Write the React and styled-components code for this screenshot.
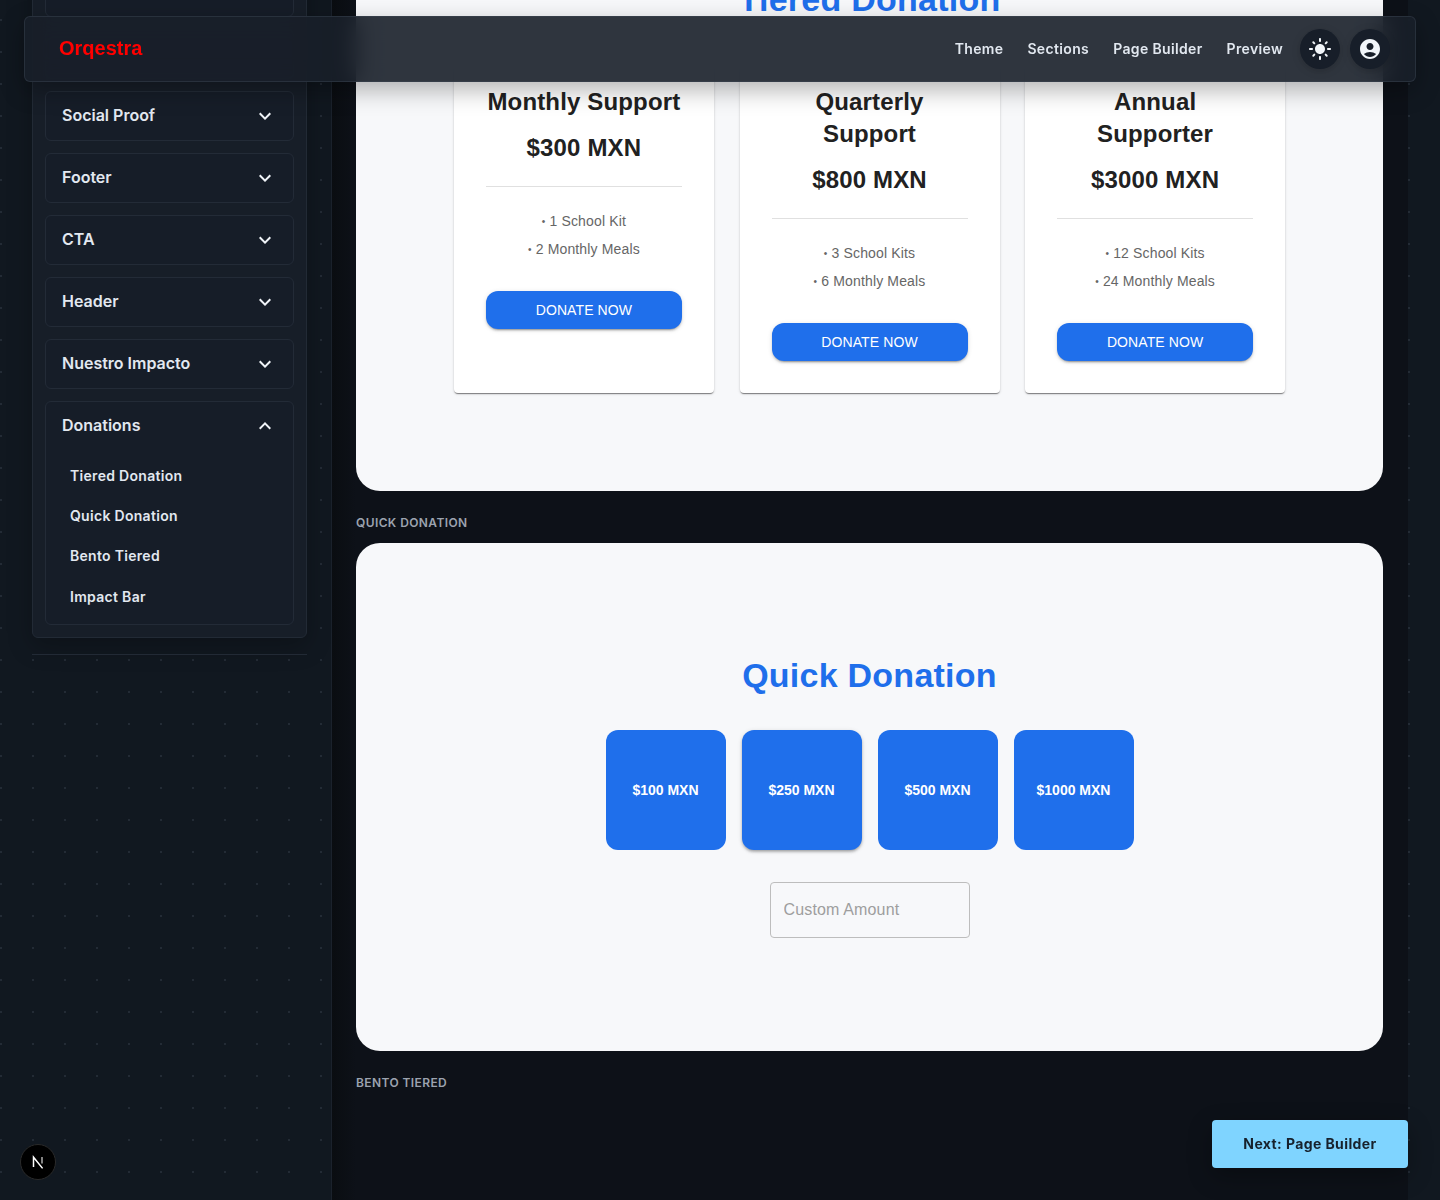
import React from 'react';
import styled, { createGlobalStyle } from 'styled-components';
import { MdExpandMore, MdExpandLess, MdLightMode, MdAccountCircle } from 'react-icons/md';

const GlobalStyle = createGlobalStyle`
  html, body {
    margin: 0;
    padding: 0;
    height: 1200px;
    overflow: hidden;
    font-family: Inter, "Liberation Sans", sans-serif;
    background-color: #111820;
    background-image: radial-gradient(circle at center, #232b35 1px, transparent 1.2px);
    background-size: 32px 32px;
    background-position: -15px 4px;
  }
  * {
    box-sizing: border-box;
  }
`;

const Layout = styled.div`
  display: flex;
  height: 1200px;
  overflow: hidden;
`;

const Sidebar = styled.aside`
  flex: 0 0 332px;
  padding: 0 24px 0 32px;
  border-right: 1px solid #1b222c;
`;
const Panel = styled.div`
  margin-top: -46px;
  padding: 12px;
  background: #171e28;
  border: 1px solid #222a35;
  border-radius: 6px;
  display: flex;
  flex-direction: column;
  gap: 12px;
  box-shadow: 0 8px 24px rgba(0, 0, 0, 0.25);
`;
const Accordion = styled.div`
  background: #161d28;
  border: 1px solid #232b37;
  border-radius: 6px;
  ${p => p.$open && 'padding-bottom: 7px;'}
`;
const AccordionHead = styled.div`
  height: 48px;
  display: flex;
  align-items: center;
  justify-content: space-between;
  padding: 0 16px;
  color: #e2e8f0;
  font-size: 16px;
  font-weight: 600;
  svg {
    font-size: 24px;
    color: #f1f5f9;
  }
`;
const AccordionTitle = styled.span`
  margin-bottom: 2px;
`;
const SubList = styled.div`
  padding: 5px 24px 0;
`;
const SubItem = styled.div`
  height: 40.4px;
  display: flex;
  align-items: center;
  color: #e2e8f0;
  font-size: 14px;
  font-weight: 600;
  letter-spacing: 0.3px;
`;
const SideDivider = styled.div`
  margin-top: 16px;
  height: 1px;
  background: #222a35;
`;

const Main = styled.main`
  flex: 0 0 1076px;
  background: linear-gradient(90deg, #0a0d11, #0d1118 24px);
  padding: 0 25px 0 24px;
`;
const Scrolled = styled.div`
  margin-top: -133px;
`;
const Preview = styled.section`
  background: #f7f8fa;
  border-radius: 24px;
  text-align: center;
  font-family: "Liberation Sans", Arial, sans-serif;
  padding: ${p => p.$padding};
`;
const SectionLabel = styled.div`
  height: 20px;
  line-height: 20px;
  margin: 22px 0 10px;
  color: #9ca3af;
  font-size: 12px;
  font-weight: 600;
  letter-spacing: 0.4px;
`;
const Heading = styled.h2`
  margin: 0 0 34px;
  color: #1f6feb;
  font-size: 34px;
  line-height: 41px;
  font-weight: 700;
  letter-spacing: 0.25px;
`;
const TierGrid = styled.div`
  width: 831.2px;
  margin: 33px auto 0;
  display: grid;
  grid-template-columns: repeat(3, 1fr);
  gap: 25.6px;
`;
const TierCard = styled.div`
  background: #fff;
  border-radius: 4px;
  padding: 32px;
  box-shadow: 0 2px 1px -1px rgba(0, 0, 0, 0.3), 0 1px 1px rgba(0, 0, 0, 0.18), 0 1px 3px rgba(0, 0, 0, 0.16);
`;
const TierName = styled.h3`
  margin: 0 0 14px;
  color: #212121;
  font-size: 24px;
  line-height: 32px;
  font-weight: 700;
  letter-spacing: 0.15px;
`;
const TierPrice = styled.div`
  color: #212121;
  font-size: 24px;
  line-height: 32px;
  font-weight: 700;
  letter-spacing: 0.15px;
  padding-bottom: 22px;
  border-bottom: 1px solid #e0e0e0;
  margin-bottom: 20px;
`;
const TierPerk = styled.div`
  color: #666;
  font-size: 14px;
  line-height: 28px;
  letter-spacing: 0.15px;
`;
const Bullet = styled.span`
  font-size: 10px;
  line-height: 0;
  vertical-align: 1px;
`;
const DonateButton = styled.button`
  display: block;
  width: 100%;
  height: 38px;
  margin-top: 28px;
  border: 0;
  border-radius: 12px;
  background: #1f6feb;
  color: #fff;
  font-family: inherit;
  font-size: 14px;
  letter-spacing: 0.1px;
  text-transform: uppercase;
  box-shadow: 0 3px 1px -2px rgba(0, 0, 0, 0.2), 0 2px 2px rgba(0, 0, 0, 0.14), 0 1px 5px rgba(0, 0, 0, 0.12);
`;
const AmountRow = styled.div`
  display: flex;
  justify-content: center;
  gap: 16px;
`;
const AmountTile = styled.button`
  width: 120px;
  height: 120px;
  border: 0;
  border-radius: 12px;
  background: #1f6feb;
  color: #fff;
  font-family: inherit;
  font-size: 14px;
  font-weight: 700;
  ${p => p.$raised && 'box-shadow: 0 2px 3px -1px rgba(0,0,0,.2), 0 2px 3px rgba(0,0,0,.14), 0 1px 5px rgba(0,0,0,.12);'}
`;
const CustomAmount = styled.input`
  display: block;
  width: 200px;
  height: 56px;
  margin: 32px auto 0;
  padding: 0 13px;
  background: transparent;
  border: 1px solid #bdbdbd;
  border-radius: 4px;
  font-family: inherit;
  font-size: 16px;
  letter-spacing: 0.15px;
  &::placeholder {
    color: #9e9e9e;
    opacity: 1;
  }
`;

const NavBar = styled.header`
  position: fixed;
  top: 16px;
  left: 24px;
  width: 1392px;
  height: 66px;
  display: flex;
  align-items: center;
  justify-content: space-between;
  padding: 0 25px 0 34px;
  background: rgba(24, 31, 41, 0.9);
  border: 1px solid rgba(60, 70, 84, 0.45);
  border-radius: 6px;
  backdrop-filter: blur(12px);
  box-shadow: 0 8px 24px rgba(0, 0, 0, 0.3);
`;
const Brand = styled.div`
  color: #ff0000;
  font-family: "Liberation Sans", Arial, sans-serif;
  font-size: 20px;
  font-weight: 700;
  margin-bottom: 2px;
`;
const NavRight = styled.nav`
  display: flex;
  align-items: center;
  gap: 24px;
`;
const NavLink = styled.span`
  color: #e2e8f0;
  font-size: 14px;
  font-weight: 600;
  letter-spacing: 0.35px;
  margin-bottom: 2px;
`;
const NavIcons = styled.div`
  display: flex;
  gap: 10px;
  margin-left: -7px;
`;
const IconCircle = styled.div`
  width: 40px;
  height: 40px;
  border-radius: 50%;
  background: #171e29;
  display: flex;
  align-items: center;
  justify-content: center;
  color: #f1f5f9;
  font-size: 24px;
  box-shadow: 0 2px 8px rgba(0, 0, 0, 0.2);
`;
const NextButton = styled.button`
  position: fixed;
  right: 32px;
  bottom: 32px;
  width: 196px;
  height: 48px;
  padding: 0 0 2px;
  border: 0;
  border-radius: 4px;
  background: #7fd4ff;
  color: #17212c;
  font-family: Inter, sans-serif;
  font-size: 14px;
  font-weight: 700;
  letter-spacing: 0.4px;
  box-shadow: 0 8px 24px rgba(0, 0, 0, 0.3);
`;
const DevBadge = styled.div`
  position: fixed;
  left: 20px;
  bottom: 20px;
  width: 36px;
  height: 36px;
  border-radius: 50%;
  background: #000;
  border: 1px solid #2a2a2a;
  display: flex;
  align-items: center;
  justify-content: center;
`;

// the two rows above Social Proof sit behind the top bar, so they carry no label
const sections = ['', '', 'Social Proof', 'Footer', 'CTA', 'Header', 'Nuestro Impacto'];
const donationItems = ['Tiered Donation', 'Quick Donation', 'Bento Tiered', 'Impact Bar'];
const tiers = [
  { name: 'Monthly Support', price: '$300 MXN', perks: ['1 School Kit', '2 Monthly Meals'] },
  { name: 'Quarterly Support', price: '$800 MXN', perks: ['3 School Kits', '6 Monthly Meals'] },
  { name: 'Annual Supporter', price: '$3000 MXN', perks: ['12 School Kits', '24 Monthly Meals'] },
];
const amounts = ['$100 MXN', '$250 MXN', '$500 MXN', '$1000 MXN'];
const links = ['Theme', 'Sections', 'Page Builder', 'Preview'];

export default function App() {
  return (
    <>
      <GlobalStyle />
      <Layout>
        <Sidebar>
          <Panel>
            {sections.map((s, i) => (
              <Accordion key={i}>
                <AccordionHead>
                  <AccordionTitle>{s}</AccordionTitle>
                  {s && <MdExpandMore />}
                </AccordionHead>
              </Accordion>
            ))}
            <Accordion $open>
              <AccordionHead>
                <AccordionTitle>Donations</AccordionTitle>
                <MdExpandLess />
              </AccordionHead>
              <SubList>
                {donationItems.map(item => <SubItem key={item}>{item}</SubItem>)}
              </SubList>
            </Accordion>
          </Panel>
          <SideDivider />
        </Sidebar>
        <Main>
          <Scrolled>
            <Preview $padding="112px 0 98px">
              <Heading>Tiered Donation</Heading>
              <TierGrid>
                {tiers.map(t => (
                  <TierCard key={t.name}>
                    <TierName>{t.name}</TierName>
                    <TierPrice>{t.price}</TierPrice>
                    {t.perks.map(p => <TierPerk key={p}><Bullet>•</Bullet> {p}</TierPerk>)}
                    <DonateButton>Donate Now</DonateButton>
                  </TierCard>
                ))}
              </TierGrid>
            </Preview>
            <SectionLabel>QUICK DONATION</SectionLabel>
            <Preview $padding="112px 0 113px">
              <Heading>Quick Donation</Heading>
              <AmountRow>
                {amounts.map((a, i) => <AmountTile key={a} $raised={i === 1}>{a}</AmountTile>)}
              </AmountRow>
              <CustomAmount placeholder="Custom Amount" />
            </Preview>
            <SectionLabel>BENTO TIERED</SectionLabel>
          </Scrolled>
        </Main>
      </Layout>
      <NavBar>
        <Brand>Orqestra</Brand>
        <NavRight>
          {links.map(l => <NavLink key={l}>{l}</NavLink>)}
          <NavIcons>
            <IconCircle><MdLightMode /></IconCircle>
            <IconCircle><MdAccountCircle /></IconCircle>
          </NavIcons>
        </NavRight>
      </NavBar>
      <NextButton>Next: Page Builder</NextButton>
      <DevBadge>
        <svg width="16" height="16" viewBox="0 0 16 16" fill="none">
          <path d="M3.5 13V3.2L12.6 14.4" stroke="#fff" strokeWidth="1.5" />
          <path d="M12 3v6.4" stroke="#bbb" strokeWidth="1.4" />
        </svg>
      </DevBadge>
    </>
  );
}
